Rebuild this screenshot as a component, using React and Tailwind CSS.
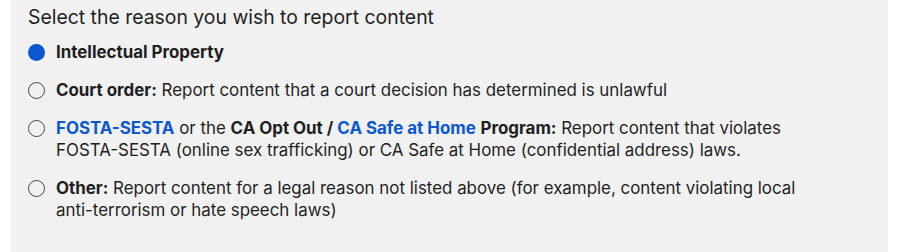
import React, { useState } from "react";

const options = [
  {
    id: "ip",
    label: <span className="font-bold">Intellectual Property</span>,
  },
  {
    id: "court",
    label: (
      <>
        <span className="font-bold">Court order:</span> Report content that a court decision has determined is unlawful
      </>
    ),
  },
  {
    id: "fosta",
    label: (
      <>
        <a className="font-bold text-[#0b57d0] whitespace-nowrap">FOSTA-SESTA</a> or the{" "}
        <span className="font-bold">CA Opt Out / </span>
        <a className="font-bold text-[#0b57d0]">CA Safe at Home</a>{" "}
        <span className="font-bold">Program:</span> Report content that violates{" "}
        <span className="whitespace-nowrap">FOSTA-SESTA</span> (online sex trafficking) or CA Safe at Home (confidential address) laws.
      </>
    ),
  },
  {
    id: "other",
    label: (
      <>
        <span className="font-bold">Other:</span> Report content for a legal reason not listed above (for example, content violating local{" "}
        <span className="whitespace-nowrap">anti-terrorism</span> or hate speech laws)
      </>
    ),
  },
];

const Radio = ({ checked }) =>
  checked ? (
    <span className="block w-[17px] h-[17px] rounded-full bg-[#0b57d0]" />
  ) : (
    <span className="block w-[17px] h-[17px] rounded-full border-[1.5px] border-[#444746]" />
  );

export default function App() {
  const [selected, setSelected] = useState("ip");

  return (
    <div className="w-[918px] h-[252px] bg-white font-['Inter',sans-serif] text-[#1f1f1f]">
      <div className="ml-[11px] w-[877px] h-full bg-[#f1f1f1] pl-[17px] pt-[5px]">
        <h2 className="text-[19.4px] leading-[24px] font-normal">Select the reason you wish to report content</h2>
        <div className="mt-[12px] flex flex-col gap-[16px]">
          {options.map((o) => (
            <label
              key={o.id}
              className="flex items-start gap-[11px] cursor-pointer"
              onClick={() => setSelected(o.id)}
            >
              <span className="mt-[3px] shrink-0">
                <Radio checked={selected === o.id} />
              </span>
              <span className="w-[760px] text-[16.9px] leading-[22px]">{o.label}</span>
            </label>
          ))}
        </div>
      </div>
    </div>
  );
}
